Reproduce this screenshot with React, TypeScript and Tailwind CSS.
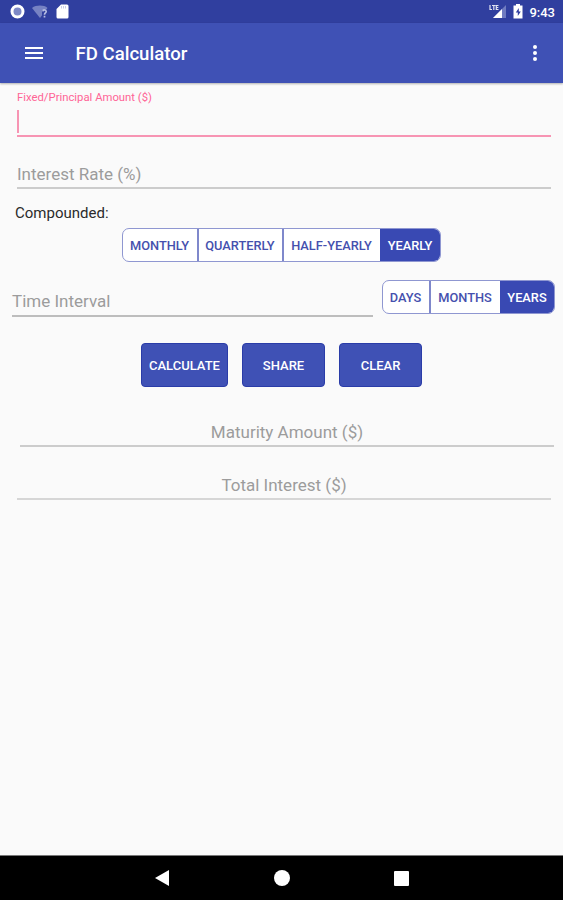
import React from 'react';
import { clsx } from 'clsx';

type Segment = { label: string; width: string };

const periods: Segment[] = [
  { label: 'MONTHLY', width: 'w-[74px]' },
  { label: 'QUARTERLY', width: 'w-[85px]' },
  { label: 'HALF-YEARLY', width: 'w-[98px]' },
  { label: 'YEARLY', width: 'w-[60px]' },
];

const intervals: Segment[] = [
  { label: 'DAYS', width: 'w-[46px]' },
  { label: 'MONTHS', width: 'w-[71px]' },
  { label: 'YEARS', width: 'w-[54px]' },
];

const actions: Segment[] = [
  { label: 'CALCULATE', width: 'w-[87px]' },
  { label: 'SHARE', width: 'w-[83px]' },
  { label: 'CLEAR', width: 'w-[83px]' },
];

const SegmentedControl = ({ items, selected }: { items: Segment[]; selected: string }) => (
  <div className="flex h-[34px] shrink-0 overflow-hidden rounded-[7px] border border-[#8f97d1] bg-white">
    {items.map((item, i) => (
      <button
        key={item.label}
        className={clsx(
          'flex items-center justify-center pt-[1px] whitespace-nowrap text-[12.8px] font-medium',
          item.width,
          i > 0 && 'border-l-2',
          item.label === selected ? 'border-[#3949b3] bg-[#3949b3] pr-[2px] text-white' : 'border-[#7f88cb] pr-[1px] text-[#4550ae]',
        )}
      >
        {item.label}
      </button>
    ))}
  </div>
);

const StatusBar = () => (
  <div className="flex h-[23px] items-center justify-between bg-[#303f9f] pr-[8px] pl-[10px] text-white">
    <div className="flex items-center">
      <svg className="h-[15px] w-[15px]" viewBox="0 0 15 15">
        <circle cx="7.5" cy="7.5" r="5.5" fill="#7d88c6" stroke="#fff" strokeWidth="3" />
      </svg>
      <svg className="ml-[7px] h-[14px] w-[16px]" viewBox="0 0 16 14">
        <path d="M0 3C4-.2 12-.2 15.500 3L8 13z" fill="#7782c3" />
        <path d="M10 5h5v8.500h-5z" fill="#303f9f" />
        <path d="M10.800 6.300c.2-1.800 3.400-1.800 3.400.2 0 1.500-1.700 1.500-1.700 3.200M12.500 10.800v1.600" fill="none" stroke="#b7bee2" strokeWidth="1.700" />
      </svg>
      <svg className="ml-[8px] h-[15px] w-[13px]" viewBox="0 0 13 15">
        <path d="M5 .5h6a1.500 1.500 0 0 1 1.500 1.500v11a1.500 1.500 0 0 1-1.500 1.500H2A1.500 1.500 0 0 1 .5 13V5z" fill="#fff" />
        <path d="M5.500 2v2.500M7.500 2v2.500M9.500 2v2.500" stroke="#c8cde8" strokeWidth="1" />
      </svg>
    </div>
    <div className="flex items-center">
      <svg className="h-[15px] w-[18px]" viewBox="0 0 18 15">
        <path d="M17 1v13H4z" fill="#6f7bc0" />
        <path d="M13 5v9H4z" fill="#fff" />
        <path d="M1 1v4.500h2M3 1.500h3.500M4.800 1.500v4.500M9.500 1.500H7.300v4h2.200M7.300 3.500h2" fill="none" stroke="#dfe2f2" strokeWidth="1.200" />
      </svg>
      <svg className="ml-[6px] h-[15px] w-[10px]" viewBox="0 0 10 15">
        <path d="M3 0h4v1.500h2.500v13H.5v-13H3z" fill="#fff" />
        <path d="M5.800 4L2.800 8.500h2V12l3-4.500h-2z" fill="#303f9f" />
      </svg>
      <span className="ml-[6px] pt-[2px] text-[13px] leading-none font-medium">9:43</span>
    </div>
  </div>
);

const Toolbar = () => (
  <header className="z-10 flex h-[60px] items-center justify-between bg-[#3f51b5] pr-[26px] pl-[25px] text-white shadow-[0_1px_2px_rgba(0,0,0,0.3)]">
    <div className="flex items-center">
      <div className="flex w-[18px] flex-col gap-[3px]">
        <span className="h-[2px] bg-white" />
        <span className="h-[2px] bg-white" />
        <span className="h-[2px] bg-white" />
      </div>
      <h1 className="ml-[32.5px] pt-[4px] text-[18.6px] font-medium">FD Calculator</h1>
    </div>
    <div className="flex flex-col gap-[2px]">
      <span className="h-[4px] w-[4px] rounded-full bg-white" />
      <span className="h-[4px] w-[4px] rounded-full bg-white" />
      <span className="h-[4px] w-[4px] rounded-full bg-white" />
    </div>
  </header>
);

const NavigationBar = () => (
  <nav className="flex h-[45px] items-center border-t border-[#777777] bg-black pl-[154px]">
    <svg className="h-[16px] w-[15px]" viewBox="0 0 15 16">
      <path d="M15 0v16L1 8z" fill="#fff" />
    </svg>
    <span className="ml-[105px] h-[16px] w-[16px] rounded-full bg-white" />
    <span className="ml-[104px] h-[15px] w-[15px] rounded-[1px] bg-white" />
  </nav>
);

const App = () => {
  return (
    <div className="flex h-[900px] w-[563px] flex-col overflow-hidden bg-[#fafafa] font-['Roboto',sans-serif]">
      <StatusBar />
      <Toolbar />

      <main className="flex-grow">
        <div className="mr-[12px] ml-[17px] h-[54px] border-b-2 border-[#f794b3] pt-[6px]">
          <label className="block h-[16px] text-[11.3px] leading-[17px] text-[#ff6496]">Fixed/Principal Amount ($)</label>
          <div className="mt-[5px] h-[23px] w-[2px] bg-[#f794b3]" />
        </div>

        <div className="mr-[12px] ml-[17px] flex h-[52px] items-end border-b-2 border-[#cccccc] text-[17px] leading-[26px] text-[#9c9c9c]">
          Interest Rate (%)
        </div>

        <p className="mt-[14px] ml-[15px] h-[20px] text-[15px] leading-[21px] text-[#2b2b2b]">Compounded:</p>

        <div className="mt-[5px] flex justify-center">
          <SegmentedControl items={periods} selected="YEARLY" />
        </div>

        <div className="mt-[18px] flex pr-[8px] pl-[12px]">
          <div className="mr-[9px] flex h-[37px] flex-grow items-end border-b-2 border-[#bdbdbd] text-[17px] leading-[28px] text-[#9c9c9c]">
            Time Interval
          </div>
          <SegmentedControl items={intervals} selected="YEARS" />
        </div>

        <div className="mt-[26px] flex justify-center gap-[14px]">
          {actions.map((action) => (
            <button
              key={action.label}
              className={clsx(
                'h-[44px] rounded-[4px] border border-[#2a3ca8] bg-[#3f51b5] pt-[2px] text-[13px] font-medium text-white',
                action.width,
              )}
            >
              {action.label}
            </button>
          ))}
        </div>

        <div className="mr-[9px] ml-[20px] flex h-[60px] items-end justify-center border-b-2 border-[#cccccc] text-[17px] leading-[25px] text-[#9c9c9c]">
          Maturity Amount ($)
        </div>

        <div className="mr-[12px] ml-[17px] flex h-[53px] items-end justify-center border-b-2 border-[#d6d6d6] text-[17px] leading-[25px] text-[#9c9c9c]">
          Total Interest ($)
        </div>
      </main>

      <NavigationBar />
    </div>
  );
};

export default App;
